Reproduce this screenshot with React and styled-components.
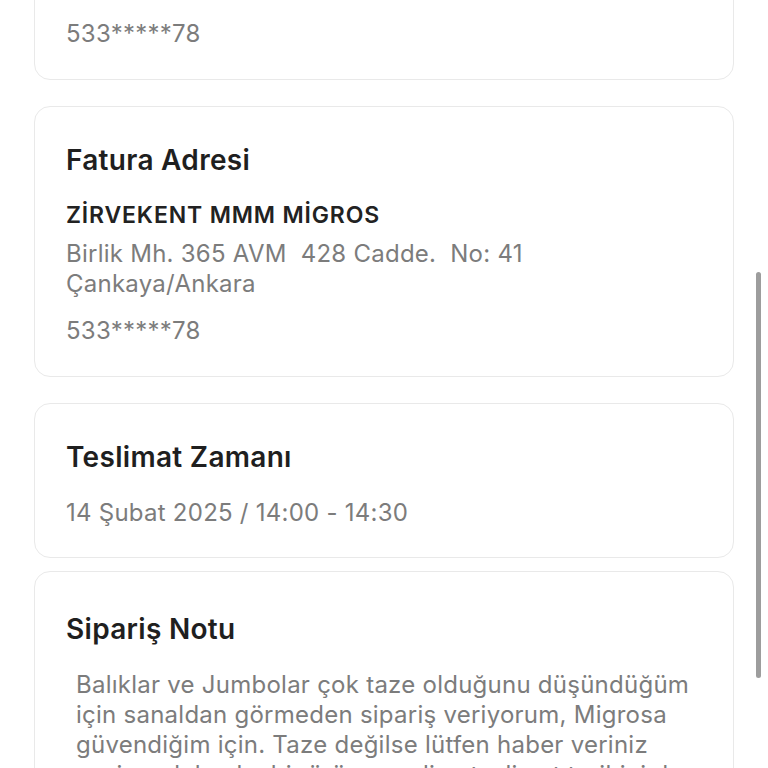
import React from "react";
import styled, { createGlobalStyle } from "styled-components";

const Global = createGlobalStyle`
  html, body { margin: 0; padding: 0; background: #ffffff; }
  body { font-family: Inter, "Noto Sans", "Liberation Sans", sans-serif; -webkit-font-smoothing: antialiased; }
`;

const Viewport = styled.div`
  position: relative;
  width: 768px;
  height: 768px;
  overflow: hidden;
  background: #ffffff;
`;

const List = styled.div`
  display: flex;
  flex-direction: column;
  padding: 0 34px;
  gap: 26px;
`;

const Card = styled.section`
  border: 1px solid #e9e9e9;
  border-radius: 16px;
  background: #fff;
  padding: ${(p) => (p.$tight ? "41px" : "37px")} 31px ${(p) => p.$bottom || 30}px;
  margin-top: ${(p) => (p.$tight ? "-13px" : "0")};
`;

const Heading = styled.h2`
  margin: 0 0 25px;
  font-size: 28px;
  line-height: 32px;
  font-weight: 600;
  color: #1f1f1f;
  letter-spacing: 0.3px;
`;

const Name = styled.div`
  font-size: 23px;
  line-height: 28px;
  font-weight: 600;
  color: #222;
  letter-spacing: 0.85px;
  margin-bottom: 10px;
`;

const Muted = styled.div`
  font-size: 24px;
  line-height: 30px;
  font-weight: 400;
  color: #7c7c7c;
  white-space: pre-wrap;
  margin-top: ${(p) => p.$gap || 0}px;
  letter-spacing: 0.25px;
`;

const Note = styled(Muted)`
  line-height: 30px;
  padding-left: 10px;
  padding-right: 8px;
`;

const Scrollbar = styled.div`
  position: absolute;
  right: 7px;
  top: 272px;
  width: 5px;
  height: 406px;
  border-radius: 3px;
  background: #9d9d9d;
`;

function AddressCard({ title }) {
  return (
    <Card>
      <Heading>{title}</Heading>
      <Name>ZİRVEKENT MMM MİGROS</Name>
      <Muted>{"Birlik Mh. 365 AVM  428 Cadde.  No: 41\nÇankaya/Ankara"}</Muted>
      <Muted $gap={17}>533*****78</Muted>
    </Card>
  );
}

export default function App() {
  const scrollOffset = 191;
  return (
    <>
      <Global />
      <Viewport>
        <List style={{ marginTop: -scrollOffset }}>
          <AddressCard title="Teslimat Adresi" />
          <AddressCard title="Fatura Adresi" />
          <Card $bottom={29}>
            <Heading>Teslimat Zamanı</Heading>
            <Muted>14 Şubat 2025 / 14:00 - 14:30</Muted>
          </Card>
          <Card $tight>
            <Heading>Sipariş Notu</Heading>
            <Note>
              Balıklar ve Jumbolar çok taze olduğunu düşündüğüm için sanaldan görmeden sipariş veriyorum, Migrosa güvendiğim için. Taze değilse lütfen haber veriniz sevinerek başka bir ürün seçelim, teslimat tarihini de değiştirebiliriz.
            </Note>
          </Card>
        </List>
        <Scrollbar />
      </Viewport>
    </>
  );
}
